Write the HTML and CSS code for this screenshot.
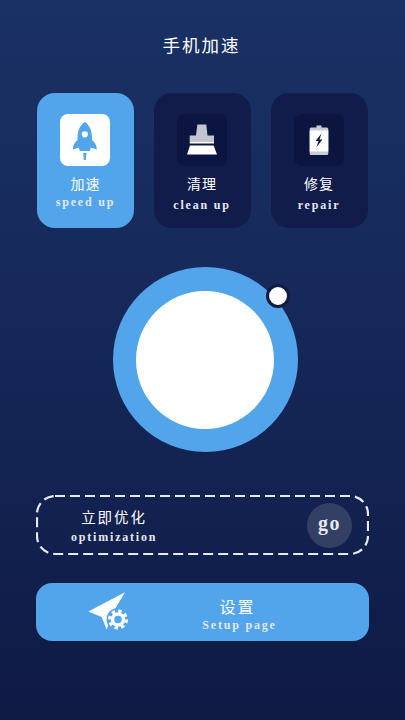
FILE: index.html
```html
<!DOCTYPE html>
<html lang="zh-CN">
<head>
    <meta charset="UTF-8">
    <title>手机加速</title>
    <link rel="stylesheet" href="styles.css">
</head>
<body>
<div class="page">
    <h1 class="title">手机加速</h1>

    <div class="cards">
        <div class="card card-on">
            <div class="icon">
                <svg viewBox="0 0 50 52" width="50" height="52">
                    <path fill="#52a5ea" fill-rule="evenodd" d="M24.8 8C29 10.5 31.8 16 32 23V26C34.5 28 36.8 31 36.8 35.5L30.8 33.5 29.800 37H19.800L18.800 33.5 12.800 35.5C12.800 31 15 28 17.500 26V23C17.800 16 20.600 10.500 24.800 8ZM24.800 17.200A3.100 3.100 0 1 0 24.800 23.400 3.100 3.100 0 1 0 24.800 17.200Z"/>
                    <path fill="#52a5ea" d="M23.200 39H26.400L25.800 46H23.800Z"/>
                </svg>
            </div>
            <div class="cn">加速</div>
            <div class="en en-tight">speed up</div>
        </div>
        <div class="card">
            <div class="icon">
                <svg viewBox="0 0 50 52" width="50" height="52">
                    <path fill="#c2c5d0" d="M20.3 10.5H29.3L30.5 21.5H37V28H12.7V21.5H19Z"/>
                    <rect fill="#fff" x="12.7" y="28" width="24.3" height="1.5"/>
                    <path fill="#fff" d="M13 31.5H36.6L40 40.5H10Z"/>
                </svg>
            </div>
            <div class="cn">清理</div>
            <div class="en">clean up</div>
        </div>
        <div class="card">
            <div class="icon">
                <svg viewBox="0 0 50 52" width="50" height="52">
                    <rect fill="#c9ccd6" x="22.5" y="11.5" width="5" height="2.5"/>
                    <rect fill="#c9ccd6" x="15.7" y="13.5" width="18.6" height="27.5" rx="1.5"/>
                    <rect fill="#fff" x="15.7" y="16.5" width="18.6" height="21"/>
                    <path fill="#0f1a45" d="M27.5 19.5 21.5 27H24.5L22.5 33 28.5 25.5H25.5Z"/>
                </svg>
            </div>
            <div class="cn">修复</div>
            <div class="en">repair</div>
        </div>
    </div>

    <div class="dial-wrap">
        <div class="dial">
            <div class="dial-core"></div>
            <span class="knob"></span>
        </div>
    </div>

    <div class="optimize">
        <svg class="dash" width="333" height="60" viewBox="0 0 333 60">
            <rect x="1" y="1" width="331" height="58" rx="18" fill="none" stroke="#e6e9f0" stroke-width="2.2" stroke-dasharray="10 5"/>
        </svg>
        <div class="optimize-text">
            <div class="cn cn-wide">立即优化</div>
            <div class="en">optimization</div>
        </div>
        <div class="go">go</div>
    </div>

    <div class="setup">
        <svg class="setup-icon" viewBox="0 0 50 45" width="50" height="45">
            <path fill="#fff" d="M41 2.2 4.3 21.5 17.7 27 22.7 39.5 28 24Z"/>
            <circle cx="34" cy="29.5" r="11.5" fill="#52a5ea"/>
            <circle cx="34" cy="29.5" r="5.5" fill="none" stroke="#fff" stroke-width="3.5"/>
            <circle cx="34" cy="29.5" r="8.5" fill="none" stroke="#fff" stroke-width="3" stroke-dasharray="3.4 3.28"/>
        </svg>
        <div class="setup-text">
            <div class="cn cn-big">设置</div>
            <div class="en">Setup page</div>
        </div>
    </div>
</div>
</body>
</html>
```

FILE: styles.css
```css
* { margin: 0; padding: 0; box-sizing: border-box; }
html, body { width: 405px; height: 720px; overflow: hidden; }
body { font-family: "Noto Sans CJK SC", "Liberation Serif", sans-serif; color: #fff; }
.page { width: 405px; height: 720px; background: linear-gradient(180deg, #1a3165 0%, #16295a 40%, #0f1a45 100%); padding-top: 33px; }

.title { font-size: 17.5px; line-height: 24px; font-weight: 400; letter-spacing: 2px; text-align: center; padding-right: 2px; }

.cn { font-size: 14px; line-height: 20px; letter-spacing: 1px; text-align: center; }
.en { font-family: "Liberation Serif", serif; font-size: 12px; font-weight: 700; line-height: 14px; letter-spacing: 1.8px; text-align: center; color: #e4e8f0; }

/**** cards ****/
.cards { display: flex; gap: 20px; padding-left: 37px; margin-top: 36px; }
.card { width: 97px; height: 135px; border-radius: 18px; background-color: #111c4b; padding-top: 21px; display: flex; flex-direction: column; align-items: center; }
.card-on { background-color: #52a5ea; margin-right: -0.5px; }
.icon { width: 50px; height: 52px; border-radius: 8px; background-color: #0b1540; margin-bottom: 7px; }
.icon svg { display: block; }
.card-on .icon { background-color: #fff; margin-right: 2px; }
.card .en { margin-top: 5px; }
.card .en-tight { margin-top: 2px; }

/**** dial ****/
.dial-wrap { display: flex; justify-content: center; margin-top: 39px; padding-left: 5px; }
.dial { position: relative; width: 185px; height: 185px; border-radius: 50%; background-color: #52a5ea; display: flex; align-items: center; justify-content: center; }
.dial-core { width: 138px; height: 138px; border-radius: 50%; background-color: #fff; }
.knob { position: absolute; left: 153px; top: 16.5px; width: 24px; height: 24px; border-radius: 50%; background-color: #fff; border: 3px solid #0f1a45; }

/**** optimize ****/
.optimize { position: relative; width: 333px; height: 60px; margin: 43px 0 0 36px; display: flex; align-items: center; justify-content: space-between; padding: 0 17px 0 35px; }
.dash { position: absolute; left: 0; top: 0; }
.optimize-text .en { margin-top: 3px; }
.cn-wide { font-size: 14.5px; letter-spacing: 2px; }
.go { width: 45px; height: 45px; border-radius: 50%; background-color: #333f63; font-family: "Liberation Serif", serif; font-size: 20px; font-weight: 700; letter-spacing: 1.5px; color: #e6e9f0; display: flex; align-items: center; justify-content: center; padding-bottom: 4px; }

/**** setup ****/
.setup { width: 333px; height: 58px; margin: 28px 0 0 36px; border-radius: 16px; background-color: #52a5ea; display: flex; align-items: center; padding-left: 48px; }
.setup-icon { display: block; }
.setup-text { margin: 3px 0 0 67px; width: 77px; }
.setup-text .en { margin-top: 1px; white-space: nowrap; }
.cn-big { font-size: 16px; line-height: 22px; letter-spacing: 2px; padding-right: 4px; }
```
